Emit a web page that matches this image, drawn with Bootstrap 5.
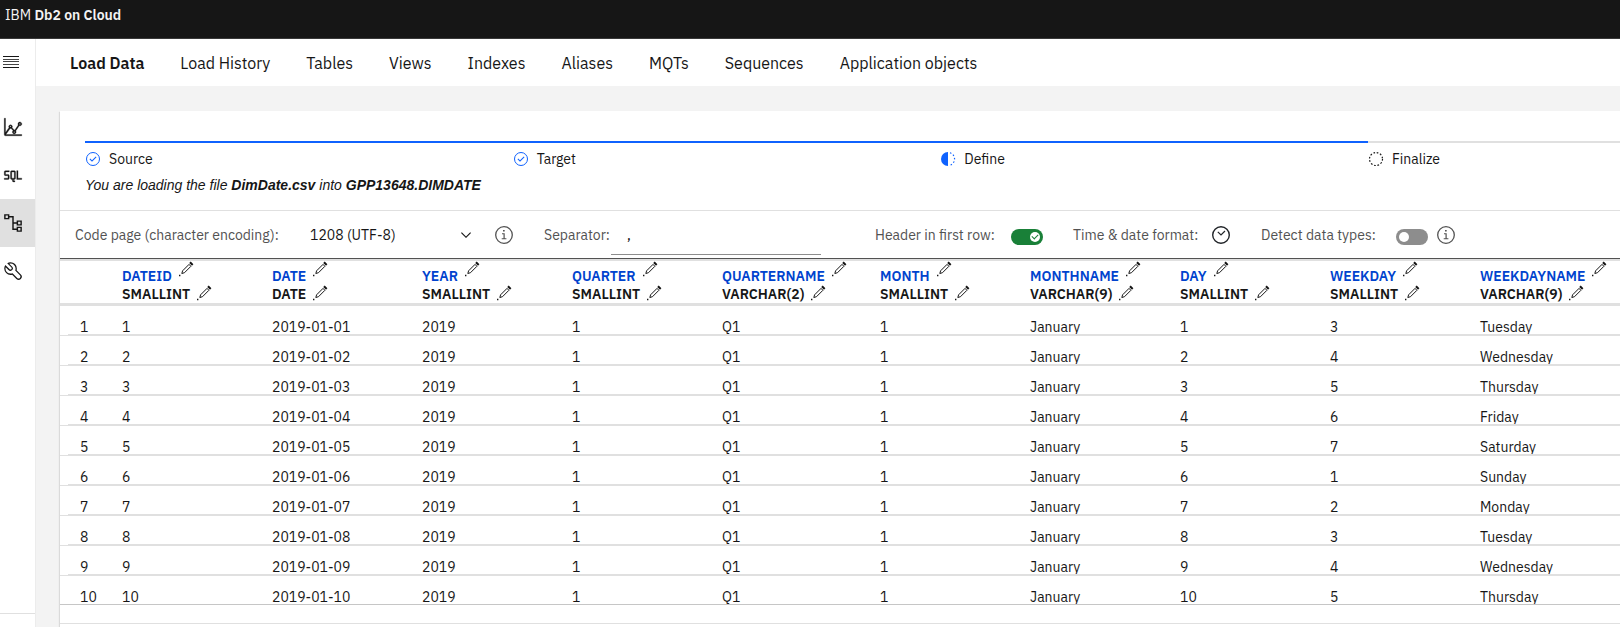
<!DOCTYPE html>
<html lang="en">
<head>
<meta charset="utf-8">
<meta name="viewport" content="width=device-width, initial-scale=1">
<title>IBM Db2 on Cloud</title>
<link href="https://cdn.jsdelivr.net/npm/bootstrap@5.3.0/dist/css/bootstrap.min.css" rel="stylesheet">
<style>
  body { font-family: "IBM Plex Sans", Roboto, sans-serif; font-size: 14px; line-height: 18px; color: #161616; background: #f3f3f3; overflow: hidden; }
  svg { display: block; fill: currentColor; }
  .semi { font-weight: 600; }
  .topbar { background: #161616; border-bottom: 1px solid #393939; color: #f4f4f4; padding: 6px 5px 14px; }
  .topbar a { color: inherit; }
  .side-rail { width: 36px; border-right: 1px solid #ececec; background: #fff; }
  .rail-btn { height: 48px; width: 100%; padding: 0 0 0 3px; border: 0; background: transparent; color: #161616; display: flex; align-items: center; }
  .rail-btn.active { background: #e0e0e0; }
  .rail-foot { height: 14px; border-top: 1px solid #e0e0e0; }
  .tabs { gap: 36px; padding: 0 34px; height: 47px; background: #fff; font-size: 16px; }
  .tabs a { padding: 0; color: #161616; }
  .panel { margin: 25px 0 0 24px; background: #fff; box-shadow: -1px 1px 1px rgba(0,0,0,.1); }
  .steps { padding: 30px 0 0 25px; }
  .step { flex: 0 0 27.86%; border-top: 2px solid #0f62fe; padding-top: 7px; gap: 8px; }
  .step svg { color: #0f62fe; }
  .step.todo { flex: 1 0 0; border-color: #e0e0e0; }
  .step.todo svg { color: #161616; }
  .file-note { font: italic 14px/18px "Liberation Sans", sans-serif; padding: 8px 25px 16px; }
  .options { display: grid; grid-template-columns: 235px 184px 50px 67px 210px 54px 136px 62px 138px 50px 135px 40px 20px; align-items: center; height: 48px; padding-left: 15px; border-top: 1px solid #e0e0e0; color: #525252; }
  .plain-select { border: 0; background: transparent; appearance: none; color: #161616; padding: 0; width: 100%; }
  .pick { display: grid; grid-template-columns: 148px 16px; align-items: center; color: #161616; }
  .sep-input { border: 0; border-bottom: 1px solid #8d8d8d; border-radius: 0; background: transparent; height: 40px; width: 100%; padding: 0 16px; color: #161616; align-self: end; margin-bottom: 3px; }
  .icon-btn { padding: 0; border: 0; background: transparent; color: inherit; }
  .flip { appearance: none; margin: 4px 0 0; width: 32px; height: 16px; border-radius: 8px; background: #8d8d8d; display: block; position: relative; }
  .flip::before { content: ""; position: absolute; left: 3px; top: 3px; width: 10px; height: 10px; border-radius: 50%; background: #fff; }
  .flip:checked { background: #198038; }
  .flip:checked::before { left: 19px; }
  .flip:checked::after { content: ""; position: absolute; left: 21px; top: 5px; width: 6px; height: 4px; border: solid #198038; border-width: 0 0 1px 1px; transform: rotate(-45deg); }
  .grid-data { table-layout: fixed; width: 100%; border-collapse: separate; border-spacing: 0; border-top: 1px solid #525252; }
  .grid-data th, .grid-data td { padding: 0 0 0 8px; }
  .grid-data thead th { height: 47px; border-top: 2px solid #e0e0e0; border-bottom: 3px solid #e0e0e0; font-weight: 600; vertical-align: top; }
  .grid-data tbody td, .grid-data tbody th { height: 30px; padding-top: 14px; line-height: 14px; vertical-align: top; overflow: hidden; border-bottom: 2px solid #e0e0e0; }
  .grid-data tbody th { font-weight: 400; padding-left: 20px; border-bottom: 0; background: linear-gradient(#e0e0e0, #e0e0e0) 8px 100% / 100% 2px no-repeat, linear-gradient(#e0e0e0, #e0e0e0) 0 100% / 100% 1px no-repeat; }
  .grid-data tbody tr:last-child > * { height: 29px; border-bottom: 1px solid #c6c6c6; background: none; }
  .head-line { display: flex; gap: 6px; height: 18px; white-space: nowrap; }
  .head-line.name { color: #0043ce; margin-top: 6px; }
  .head-line.name .icon-btn { margin-top: -6px; }
  .head-line .icon-btn { color: #161616; height: 16px; }
  .panel-end { height: 19px; border-bottom: 1px solid #e0e0e0; }
</style>
</head>
<body class="vh-100 d-flex flex-column">
<svg class="d-none">
  <symbol id="info" viewBox="0 0 20 20"><circle cx="10" cy="10" r="8.3" fill="none" stroke="currentColor" stroke-width="1.3"/><path d="M8 8.2h2.700v5H12.400v1.100H7.700v-1.100h1.800v-4H8zM9 5h1.700v1.600H9z"/></symbol>
  <symbol id="pencil" viewBox="0 0 16 16"><path d="M4.600 9.800 11 3.400l1.900 1.900-6.400 6.400-2.700.800z" fill="none" stroke="currentColor"/><path d="M11.200 2 12.700.6 15.400 3.300 14 4.700zM1 13.800h1.400v1.400H1z"/></symbol>
  <symbol id="done" viewBox="0 0 16 16"><circle cx="8" cy="8" r="6.5" fill="none" stroke="currentColor"/><path d="M7 10.700 4.500 8.200l.7-.7L7 9.300 10.800 5.500l.7.7z"/></symbol>
</svg>
<header class="topbar"><a href="#" class="text-decoration-none">IBM <span class="semi">Db2 on Cloud</span></a></header>
<div class="d-flex flex-grow-1">
  <aside class="side-rail d-flex flex-column flex-shrink-0">
    <button class="rail-btn mb-3" aria-label="Menu"><svg width="16" height="14" viewBox="0 0 16 14" shape-rendering="crispEdges"><path d="M0 0h16v1H0zM0 11h16v1H0z"/><path d="M0 3h16v1H0zM0 5h16v1H0zM0 8h16v1H0z" opacity=".8"/></svg></button>
    <button class="rail-btn" aria-label="Monitor"><svg width="20" height="20" viewBox="0 0 32 32"><path d="M4.670 28 11.390 18.440A3 3 0 0 0 13 18.240L16.080 21.780A3 3 0 1 0 21 24a2.900 2.900 0 0 0-.630-1.780L26 14A3.100 3.100 0 1 0 24.410 12.780L18.700 21.080A2.900 2.900 0 0 0 17.590 20.460L14.600 17A3 3 0 1 0 9.500 17L4 24.870V2H2V28a2 2 0 0 0 2 2H30V28ZM27 10a1 1 0 1 1-1 1 1 1 0 0 1 1-1ZM18 23a1 1 0 1 1-1 1 1 1 0 0 1 1-1ZM12 14a1 1 0 1 1-1 1 1 1 0 0 1 1-1Z" stroke="currentColor" stroke-width=".5"/></svg></button>
    <button class="rail-btn" aria-label="SQL"><svg width="20" height="20" viewBox="0 0 32 32"><path d="M24 21V9h-2v14h8v-2zM18 9h-4a2 2 0 0 0-2 2v10a2 2 0 0 0 2 2h1v2a2 2 0 0 0 2 2h2v-2h-2v-2h1a2 2 0 0 0 2-2V11a2 2 0 0 0-2-2zm-4 12V11h4v10zM8 23H2v-2h6v-4H4a2 2 0 0 1-2-2v-4a2 2 0 0 1 2-2h6v2H4v4h4a2 2 0 0 1 2 2v4a2 2 0 0 1-2 2z" stroke="currentColor" stroke-width=".5"/></svg></button>
    <button class="rail-btn active" aria-label="Data"><svg width="20" height="20" viewBox="0 0 32 32"><path d="M3 3h6v6H3zM23 13h6v6h-6zM23 23h6v6h-6zM9 6h7v20h7M16 16h7" fill="none" stroke="currentColor" stroke-width="2.3"/></svg></button>
    <button class="rail-btn" aria-label="Tools"><svg width="20" height="20" viewBox="0 0 32 32"><path d="M12.100 2a9.800 9.800 0 0 0-5.400 1.600l6.400 6.400a2.100 2.100 0 0 1 .2 3 2.100 2.100 0 0 1-3-.2L3.700 6.400A9.840 9.840 0 0 0 2 12.100a10.140 10.140 0 0 0 10.100 10.100 10.900 10.900 0 0 0 2.600-.3l6.700 6.700a5 5 0 0 0 7.100-7.100l-6.700-6.700a10.900 10.900 0 0 0 .3-2.600A10 10 0 0 0 12.100 2zm8 10.100a7.610 7.610 0 0 1-.3 2.100l-.3 1.100.8.800 6.700 6.700a2.880 2.880 0 0 1 .9 2.100A2.720 2.720 0 0 1 27 27a2.900 2.900 0 0 1-4.200 0l-6.700-6.700-.8-.8-1.100.3a7.610 7.610 0 0 1-2.100.3 8.270 8.270 0 0 1-5.700-2.300A7.630 7.630 0 0 1 4 12.100a8.330 8.330 0 0 1 .3-2.200l4.400 4.400a4.140 4.140 0 0 0 5.900.2 4.140 4.140 0 0 0-.2-5.900L10 4.200a6.450 6.450 0 0 1 2-.3 8.270 8.270 0 0 1 5.700 2.300 8.490 8.490 0 0 1 2.400 5.900z"/></svg></button>
    <div class="rail-foot mt-auto"></div>
  </aside>
  <main class="flex-grow-1 d-flex flex-column">
    <nav class="tabs d-flex align-items-center">
      <a class="nav-link semi" href="#" aria-current="page">Load Data</a>
      <a class="nav-link" href="#">Load History</a>
      <a class="nav-link" href="#">Tables</a>
      <a class="nav-link" href="#">Views</a>
      <a class="nav-link" href="#">Indexes</a>
      <a class="nav-link" href="#">Aliases</a>
      <a class="nav-link" href="#">MQTs</a>
      <a class="nav-link" href="#">Sequences</a>
      <a class="nav-link" href="#">Application objects</a>
    </nav>
    <section class="panel flex-grow-1">
      <div class="steps d-flex">
        <div class="step d-flex align-items-center"><svg width="16" height="16"><use href="#done"/></svg>Source</div>
        <div class="step d-flex align-items-center"><svg width="16" height="16"><use href="#done"/></svg>Target</div>
        <div class="step d-flex align-items-center"><svg width="16" height="16" viewBox="0 0 16 16"><path d="M8 1a7 7 0 0 0 0 14z"/><path d="M10 1.800A6.500 6.500 0 0 1 10 14.200" fill="none" stroke="currentColor" stroke-width="1.200" stroke-dasharray="1.500 2"/></svg>Define</div>
        <div class="step todo d-flex align-items-center"><svg width="16" height="16" viewBox="0 0 16 16"><circle cx="8" cy="8" r="6.500" fill="none" stroke="currentColor" stroke-width="1.200" stroke-dasharray="1.700 1.700"/></svg>Finalize</div>
      </div>
      <p class="file-note mb-0">You are loading the file <b>DimDate.csv</b> into <b>GPP13648.DIMDATE</b></p>
      <form class="options">
        <label for="codepage">Code page (character encoding):</label>
        <div class="pick">
          <select id="codepage" class="plain-select"><option>1208 (UTF-8)</option></select>
          <svg width="16" height="16" viewBox="0 0 16 16"><path d="m8 11-5-5 .8-.8L8 9.400l4.200-4.200.8.800z"/></svg>
        </div>
        <button type="button" class="icon-btn" aria-label="Code page help"><svg width="20" height="20"><use href="#info"/></svg></button>
        <label for="sep">Separator:</label>
        <input id="sep" class="sep-input" type="text" value=",">
        <span></span>
        <label for="hdr">Header in first row:</label>
        <input id="hdr" class="flip" type="checkbox" checked>
        <span>Time &amp; date format:</span>
        <button type="button" class="icon-btn text-dark" aria-label="Time and date format"><svg width="20" height="20" viewBox="0 0 20 20"><circle cx="10" cy="10" r="8.300" fill="none" stroke="currentColor" stroke-width="1.400"/><path d="m6.800 6.800 3.200 3.200 4-4" fill="none" stroke="currentColor" stroke-width="1.200"/></svg></button>
        <label for="detect">Detect data types:</label>
        <input id="detect" class="flip" type="checkbox">
        <button type="button" class="icon-btn" aria-label="Detection help"><svg width="20" height="20"><use href="#info"/></svg></button>
      </form>
      <table class="grid-data">
        <colgroup><col style="width:54px"><col style="width:150px"><col style="width:150px"><col style="width:150px"><col style="width:150px"><col style="width:158px"><col style="width:150px"><col style="width:150px"><col style="width:150px"><col style="width:150px"><col></colgroup>
        <thead><tr id="head"><th></th></tr></thead>
        <tbody id="rows"></tbody>
      </table>
      <div class="panel-end"></div>
    </section>
  </main>
</div>
<script src="https://cdn.jsdelivr.net/npm/bootstrap@5.3.0/dist/js/bootstrap.bundle.min.js"></script>
<script>
  const columns = [['DATEID', 'SMALLINT'], ['DATE', 'DATE'], ['YEAR', 'SMALLINT'], ['QUARTER', 'SMALLINT'], ['QUARTERNAME', 'VARCHAR(2)'],
    ['MONTH', 'SMALLINT'], ['MONTHNAME', 'VARCHAR(9)'], ['DAY', 'SMALLINT'], ['WEEKDAY', 'SMALLINT'], ['WEEKDAYNAME', 'VARCHAR(9)']];
  const days = ['Sunday', 'Monday', 'Tuesday', 'Wednesday', 'Thursday', 'Friday', 'Saturday'];
  const pencil = what => `<button type="button" class="icon-btn" aria-label="Edit ${what}"><svg width="16" height="16"><use href="#pencil"/></svg></button>`;
  document.getElementById('head').insertAdjacentHTML('beforeend', columns.map(([name, type]) =>
    `<th scope="col"><div class="head-line name">${name}${pencil('name')}</div><div class="head-line">${type}${pencil('type')}</div></th>`).join(''));
  document.getElementById('rows').innerHTML = Array.from({ length: 10 }, (_, i) => {
    const n = i + 1, wd = (n + 1) % 7;
    const cells = [n, '2019-01-' + String(n).padStart(2, '0'), 2019, 1, 'Q1', 1, 'January', n, wd + 1, days[wd]];
    return `<tr><th scope="row">${n}</th>${cells.map(c => `<td>${c}</td>`).join('')}</tr>`;
  }).join('');
</script>
</body>
</html>
